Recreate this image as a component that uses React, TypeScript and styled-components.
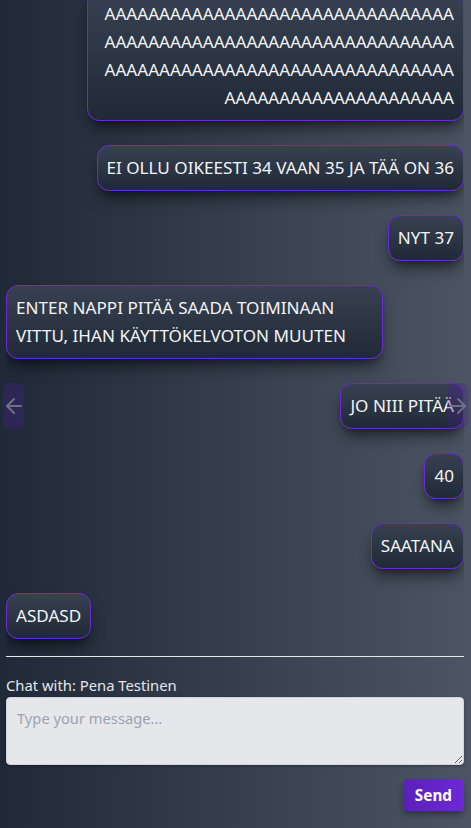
import React, { useLayoutEffect, useRef } from "react";
import styled, { createGlobalStyle } from "styled-components";
import { ArrowLeft, ArrowRight } from "lucide-react";

const GlobalStyle = createGlobalStyle`
  html, body { margin: 0; padding: 0; }
  body {
    font-family: "Noto Sans", "Open Sans", Arial, sans-serif;
    background: #1f2937;
  }
  * { box-sizing: border-box; }
`;

const Page = styled.div`
  position: relative;
  height: 100vh;
  display: flex;
  flex-direction: column;
  padding: 0 7px 0 6px;
  background: linear-gradient(to right, #1f2937, #4b5563);
  color: #e5e7eb;
  overflow: hidden;
`;

const MessageList = styled.div`
  flex: 1;
  min-height: 0;
  overflow-y: auto;
  display: flex;
  flex-direction: column;
  gap: 24px;
  padding-bottom: 17px;
  scrollbar-width: none;
  &::-webkit-scrollbar { display: none; }
`;

const Row = styled.div<{ $own: boolean }>`
  display: flex;
  justify-content: ${(p) => (p.$own ? "flex-end" : "flex-start")};
`;

const Bubble = styled.div<{ $own: boolean }>`
  max-width: 377px;
  padding: 8px 9px;
  border: 1px solid #6d28d9;
  border-radius: 12px;
  background: linear-gradient(to bottom, #374151, #1f2937);
  box-shadow: 0 10px 15px -3px rgba(0, 0, 0, 0.5), 0 4px 6px -4px rgba(0, 0, 0, 0.45);
  color: #f3f4f6;
  font-size: 17.1px;
  line-height: 28px;
  text-align: ${(p) => (p.$own ? "right" : "left")};
  word-break: break-word;
  overflow-wrap: anywhere;
`;

const NavButton = styled.button<{ $side: "left" | "right" }>`
  position: absolute;
  top: 383px;
  ${(p) => (p.$side === "left" ? "left: 3px;" : "right: 3px;")}
  width: 21px;
  height: 46px;
  padding: 0;
  border: none;
  border-radius: 7px;
  background: rgba(76, 29, 149, 0.3);
  color: #6b7280;
  display: flex;
  align-items: center;
  justify-content: center;
  overflow: visible;
  cursor: pointer;
  svg { flex-shrink: 0; }
`;

const Footer = styled.div`
  display: flex;
  flex-direction: column;
  border-top: 1px solid #e5e7eb;
  padding: 16px 0 17px;
`;

const Label = styled.label`
  font-size: 14.8px;
  line-height: 24px;
  color: #e5e7eb;
`;

const TextArea = styled.textarea`
  display: block;
  width: 100%;
  height: 68px;
  padding: 8px 10px;
  border: 1px solid #d1d5db;
  border-radius: 4px;
  background: #e5e7eb;
  font-family: inherit;
  font-size: 14.7px;
  line-height: 24px;
  color: #111827;
  box-shadow: 0 1px 3px rgba(0, 0, 0, 0.3);
  &::placeholder { color: #9ca3af; }
`;

const ButtonRow = styled.div`
  display: flex;
  justify-content: flex-end;
  margin-top: 14px;
`;

const SendButton = styled.button`
  height: 32px;
  padding: 0 12px;
  border: none;
  border-radius: 4px;
  background: linear-gradient(to right, #5b21b6, #6d28d9);
  color: #ffffff;
  font-family: inherit;
  font-weight: 700;
  font-size: 15.3px;
  box-shadow: 0 4px 6px -1px rgba(0, 0, 0, 0.4);
  cursor: pointer;
`;

type Msg = { text: string; own: boolean };

const messages: Msg[] = [
  { text: "33", own: true },
  { text: "A".repeat(117), own: true },
  { text: "EI OLLU OIKEESTI 34 VAAN 35 JA TÄÄ ON 36", own: true },
  { text: "NYT 37", own: true },
  { text: "ENTER NAPPI PITÄÄ SAADA TOIMINAAN VITTU, IHAN KÄYTTÖKELVOTON MUUTEN", own: false },
  { text: "JO NIII PITÄÄ", own: true },
  { text: "40", own: true },
  { text: "SAATANA", own: true },
  { text: "ASDASD", own: false },
];

export default function App() {
  const listRef = useRef<HTMLDivElement>(null);
  useLayoutEffect(() => {
    const el = listRef.current;
    if (el) el.scrollTop = el.scrollHeight;
  }, []);

  return (
    <>
      <GlobalStyle />
      <Page>
        <MessageList ref={listRef}>
          {messages.map((m, i) => (
            <Row key={i} $own={m.own}>
              <Bubble $own={m.own}>{m.text}</Bubble>
            </Row>
          ))}
        </MessageList>
        <NavButton $side="left" aria-label="Previous">
          <ArrowLeft size={24} strokeWidth={2} />
        </NavButton>
        <NavButton $side="right" aria-label="Next">
          <ArrowRight size={24} strokeWidth={2} />
        </NavButton>
        <Footer>
          <Label htmlFor="msg">Chat with: Pena Testinen</Label>
          <TextArea id="msg" placeholder="Type your message..." />
          <ButtonRow>
            <SendButton>Send</SendButton>
          </ButtonRow>
        </Footer>
      </Page>
    </>
  );
}
